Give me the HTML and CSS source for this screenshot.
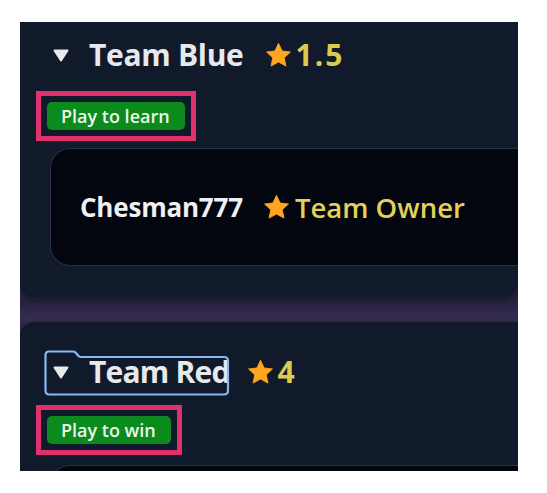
FILE: index.html
```html
<!DOCTYPE html>
<html lang="en">
<head>
<meta charset="utf-8">
<title>Teams</title>
<link rel="stylesheet" href="styles.css">
</head>
<body>
<div class="stage">
  <section class="team team-first">
    <div class="summary">
      <svg class="caret" viewBox="0 0 16 13" width="16" height="13"><path d="M1.5 1.5 H14.5 L8 11.5 Z" fill="#e8eaee" stroke="#e8eaee" stroke-width="2" stroke-linejoin="round"/></svg>
      <span class="title">Team Blue</span>
      <span class="rating">
        <svg class="star" viewBox="0 0 24 24" width="27" height="27"><path d="M12 1.2l3.2 6.8 7.4.9-5.5 5.1 1.5 7.4L12 17.8l-6.6 3.6 1.5-7.4-5.5-5.1 7.4-.9z" fill="#ffa51f" stroke="#ffa51f" stroke-width="0.8" stroke-linejoin="round"/></svg>
        <span class="score">1.5</span>
      </span>
    </div>
    <div class="highlight"><span class="badge">Play to learn</span></div>
    <div class="member">
      <span class="member-name">Chesman777</span>
      <span class="role">
        <svg class="star" viewBox="0 0 24 24" width="27" height="27"><path d="M12 1.2l3.2 6.8 7.4.9-5.5 5.1 1.5 7.4L12 17.8l-6.6 3.6 1.5-7.4-5.5-5.1 7.4-.9z" fill="#ffa51f" stroke="#ffa51f" stroke-width="0.8" stroke-linejoin="round"/></svg>
        <span class="role-text">Team Owner</span>
      </span>
    </div>
  </section>
  <section class="team team-second">
    <div class="summary">
      <svg class="caret" viewBox="0 0 16 13" width="16" height="13"><path d="M1.5 1.5 H14.5 L8 11.5 Z" fill="#e8eaee" stroke="#e8eaee" stroke-width="2" stroke-linejoin="round"/></svg>
      <span class="title title-tight">Team Red</span>
      <span class="rating rating-tight">
        <svg class="star" viewBox="0 0 24 24" width="27" height="27"><path d="M12 1.2l3.2 6.8 7.4.9-5.5 5.1 1.5 7.4L12 17.8l-6.6 3.6 1.5-7.4-5.5-5.1 7.4-.9z" fill="#ffa51f" stroke="#ffa51f" stroke-width="0.8" stroke-linejoin="round"/></svg>
        <span class="score">4</span>
      </span>
      <svg class="focus-ring" viewBox="0 0 186 46" width="186" height="46"><path d="M5 1.5 H29 Q31 1.5 32.5 3.5 L34.5 6 Q35.5 7 37.5 7 H180 Q184 7 184 11 V40.5 Q184 44.5 180 44.5 H5.5 Q1.5 44.5 1.5 40.5 V5.5 Q1.5 1.5 5 1.5 Z" fill="none" stroke="#8ab8f0" stroke-width="2.2"/></svg>
    </div>
    <div class="highlight"><span class="badge">Play to win</span></div>
    <div class="member"></div>
  </section>
</div>
</body>
</html>
```
FILE: styles.css
```css
html, body {
  margin: 0;
  padding: 0;
  background: #ffffff;
}

.stage {
  margin: 22px 29px 0 20px;
  height: 449px;
  overflow: hidden;
  display: flex;
  flex-direction: column;
  gap: 25px;
  background: linear-gradient(180deg, #1a1b2e 0%, #1f1d34 240px, #2a2442 282px, #352c50 296px, #2e2647 308px, #161b2c 320px);
  font-family: "Open Sans", "Noto Sans", sans-serif;
}

.team {
  flex: none;
  background: #111a2a;
  padding: 0 0 0 16px;
  box-shadow: 0 4px 10px rgba(0, 0, 0, 0.3);
}

.team-first {
  margin-top: -17px;
  height: 292px;
  box-sizing: border-box;
  padding-top: 32px;
  border-radius: 0 0 14px 14px;
}

.team-second {
  height: 200px;
  box-sizing: border-box;
  padding-top: 32px;
  border-radius: 14px 0 0 0;
}

.summary {
  position: relative;
  display: flex;
  align-items: center;
  height: 36px;
  padding-left: 17px;
}

.caret {
  display: block;
  flex: none;
  margin-right: 20px;
}

.title {
  color: #e7e9ed;
  font-size: 30px;
  font-weight: 700;
  letter-spacing: -0.3px;
  line-height: 36px;
  white-space: nowrap;
}

.title-tight {
  letter-spacing: -0.8px;
}

.rating {
  display: flex;
  align-items: center;
  margin-left: 21px;
}

.rating-tight {
  margin-left: 17px;
}

.star {
  display: block;
  flex: none;
}

.score {
  color: #dccb4f;
  font-size: 30px;
  font-weight: 700;
  margin-left: 4px;
  letter-spacing: 2px;
  line-height: 36px;
}

.focus-ring {
  position: absolute;
  left: 8px;
  top: -4px;
  pointer-events: none;
}

.highlight {
  display: inline-flex;
  margin-top: 18px;
  border: 5px solid #e2306a;
  padding: 6px;
}

.team-second .highlight {
  margin-top: 15px;
}

.badge {
  display: block;
  background: #0b8a1e;
  color: #eef6ea;
  font-size: 18px;
  font-weight: 600;
  line-height: 28px;
  padding: 0 15px 0 14px;
  border-radius: 5px;
}

.member {
  margin: 7px 0 0 14px;
  height: 118px;
  box-sizing: border-box;
  background: #03060f;
  border: 1.5px solid #2a3140;
  border-right: none;
  border-radius: 20px 0 0 20px;
  display: flex;
  align-items: center;
  padding-left: 29px;
}

.team-second .member {
  margin-top: 10px;
}

.member-name {
  color: #eef0f4;
  font-size: 26px;
  font-weight: 700;
  letter-spacing: -0.2px;
}

.role {
  display: flex;
  align-items: center;
  margin-left: 20px;
}

.role-text {
  color: #e2d15a;
  font-size: 27.5px;
  font-weight: 600;
  margin-left: 5px;
}
```
